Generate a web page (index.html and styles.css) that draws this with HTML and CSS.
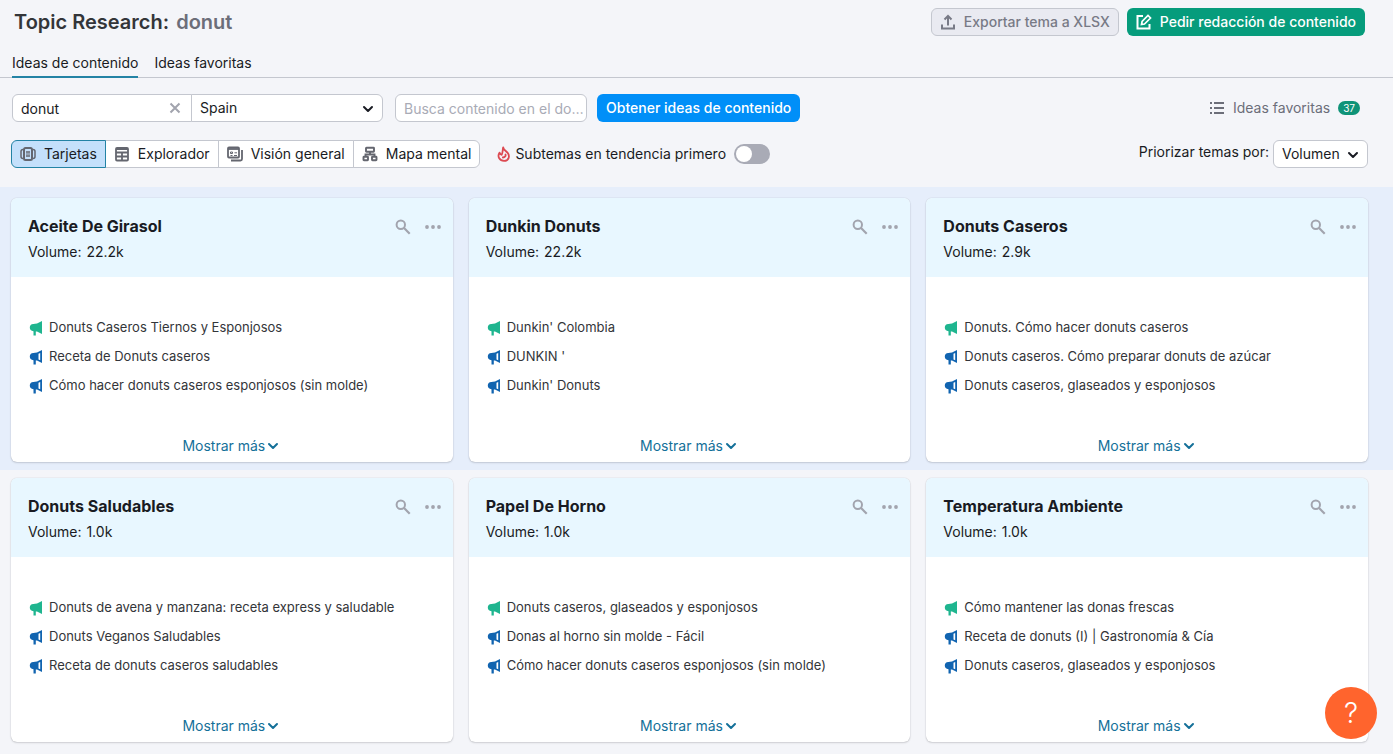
FILE: index.html
```html
<!DOCTYPE html>
<html lang="es">
<head>
  <meta charset="UTF-8">
  <meta name="viewport" content="width=device-width, initial-scale=1">
  <title>Topic Research: donut</title>
  <link rel="stylesheet" href="styles.css">
</head>
<body>

<!-- shared icons -->
<svg class="sprite" aria-hidden="true">
  <symbol id="i-chevron" viewBox="0 0 12 12"><path d="M2 4l4 4 4-4" fill="none" stroke="currentColor" stroke-width="2" stroke-linecap="round" stroke-linejoin="round"/></symbol>
  <symbol id="i-search" viewBox="0 0 16 16"><circle cx="5.800" cy="5.800" r="4.200" fill="none" stroke="currentColor" stroke-width="2"/><path d="M8.800 8.800l5.900 5.900" stroke="currentColor" stroke-width="2.200"/></symbol>
  <symbol id="i-dots" viewBox="0 0 16 16"><g fill="currentColor"><circle cx="2" cy="8" r="1.900"/><circle cx="8" cy="8" r="1.900"/><circle cx="14" cy="8" r="1.900"/></g></symbol>
  <symbol id="i-horn" viewBox="0 0 14 16"><path d="M13 1v13L8 11.600H6.800V15.500H4.500V11.300C2 11 .8 9.600 .8 7.500S2 4 4.300 3.900L8 3.500z" fill="currentColor"/></symbol>
  <symbol id="i-horn-open" viewBox="0 0 14 16"><path d="M13 1v13L8 11.600H6.800V15.500H4.500V11.300C2 11 .8 9.600 .8 7.500S2 4 4.300 3.900L8 3.500z" fill="currentColor"/><path d="M9.500 4.800L11.200 4v7.200L9.500 10.400z" fill="#fff"/></symbol>
</svg>

<header class="header">
  <h1 class="title">Topic Research: <span>donut</span></h1>
  <div class="actions">
    <button class="btn btn-export" disabled>
      <svg class="icon" viewBox="0 0 16 16" fill="none" stroke="currentColor" stroke-width="2"><path d="M2 10.500v4h12v-4M8 11.500V3M4.500 5.500L8 2l3.500 3.500"/></svg>
      Exportar tema a XLSX
    </button>
    <button class="btn btn-order">
      <svg class="icon" viewBox="0 0 16 16" fill="none" stroke="currentColor" stroke-width="2"><path d="M7 2H1.500v12.500H13.500V10"/><path d="M5.500 10.500l.6-3L12 1.500l2.500 2.500-6 6z" stroke-width="1.700"/></svg>
      Pedir redacción de contenido
    </button>
  </div>
</header>

<nav class="tabs">
  <a href="#" class="tab active">Ideas de contenido</a>
  <a href="#" class="tab">Ideas favoritas</a>
</nav>

<form class="search-row">
  <div class="field-group">
    <div class="field field-topic">
      <input type="text" value="donut" aria-label="Tema">
      <button type="button" class="clear" aria-label="Borrar">
        <svg viewBox="0 0 12 12"><path d="M1.500 1.500l9 9M10.500 1.500l-9 9" stroke="currentColor" stroke-width="2"/></svg>
      </button>
    </div>
    <div class="field field-country">
      <select aria-label="País"><option>Spain</option></select>
      <svg class="chevron"><use href="#i-chevron"/></svg>
    </div>
  </div>
  <input type="text" class="domain" placeholder="Busca contenido en el dominio" aria-label="Dominio">
  <button type="button" class="btn btn-primary">Obtener ideas de contenido</button>
  <a href="#" class="favorites">
    <svg class="icon" viewBox="0 0 16 16" fill="currentColor"><path d="M1 2h2v2H1zM5 2h10v2H5zM1 7h2v2H1zM5 7h10v2H5zM1 12h2v2H1zM5 12h10v2H5z"/></svg>
    Ideas favoritas
    <span class="badge">37</span>
  </a>
</form>

<div class="view-row">
  <div class="views">
    <button class="view active">
      <svg class="icon" viewBox="0 0 16 16" fill="none" stroke="currentColor"><rect x="4" y="2" width="8" height="12" rx="1.500" stroke-width="2"/><path d="M6 6h4M6 10h4" stroke-width="1.400"/><path d="M6 8h4" stroke-width="1"/><path d="M3 3.500C1.500 3.500 1 4.500 1 5.500v5c0 1 .5 2 2 2M13 3.500c1.500 0 2 1 2 2v5c0 1-.5 2-2 2" stroke-width="1.500"/></svg>
      Tarjetas
    </button>
    <button class="view">
      <svg class="icon" viewBox="0 0 16 16" fill="none" stroke="currentColor" stroke-width="1.800"><rect x="2" y="2" width="12" height="12.500" rx="1"/><path d="M2 3h12M2 6.500h12M2 10.500h12M8 6.500v8"/></svg>
      Explorador
    </button>
    <button class="view">
      <svg class="icon" viewBox="0 0 16 16" fill="none" stroke="currentColor" stroke-width="1.800"><rect x="1" y="1.500" width="11" height="10" rx="1"/><path d="M1 3h11"/><path d="M3.500 6h2v1.500h-2zM7.500 6.800h2.500M3.500 9.500h2M7 9.500h3" stroke-width="1"/><path d="M15 4v9q0 1.500-1.500 1.500H4"/></svg>
      Visión general
    </button>
    <button class="view">
      <svg class="icon" viewBox="0 0 16 16" fill="none" stroke="currentColor" stroke-width="1.900"><rect x="4" y="1.800" width="8" height="4" rx=".5"/><rect x="1.500" y="10.800" width="4.500" height="3.500" rx=".5"/><rect x="10" y="10.800" width="4.500" height="3.500" rx=".5"/><path d="M8 6v2.500M3.500 11V8.500h9V11"/></svg>
      Mapa mental
    </button>
  </div>
  <label class="trending">
    <svg class="flame" viewBox="0 0 16 16"><path d="M7.200 1.300c.3 2.400 2.600 3.400 4.300 5.400 2.900 3.500 1 8-3.300 8.200-4.600.1-7.200-4.200-4.700-8.300.4 1.300 1.100 2 2.200 2.200C7 6.500 6.500 3.500 7.200 1.300zM9.500 8.500c.5 1.500-.4 2.700-2.700 3" fill="none" stroke="#dc4a52" stroke-width="1.800" stroke-linejoin="round" stroke-linecap="round"/></svg>
    <span>Subtemas en tendencia primero</span>
    <input type="checkbox" class="switch">
  </label>
  <div class="priority">
    <label for="priority">Priorizar temas por:</label>
    <div class="field field-priority">
      <select id="priority"><option>Volumen</option></select>
      <svg class="chevron"><use href="#i-chevron"/></svg>
    </div>
  </div>
</div>

<main>
  <section class="cards selected">
    <article class="card">
      <div class="card-head">
        <div><h2>Aceite De Girasol</h2><p>Volume: <span>22.2k</span></p></div>
        <div class="tools">
          <button aria-label="Buscar"><svg><use href="#i-search"/></svg></button>
          <button aria-label="Más"><svg><use href="#i-dots"/></svg></button>
        </div>
      </div>
      <ul class="ideas">
        <li><svg class="top"><use href="#i-horn"/></svg>Donuts Caseros Tiernos y Esponjosos</li>
        <li><svg><use href="#i-horn-open"/></svg>Receta de Donuts caseros</li>
        <li><svg><use href="#i-horn-open"/></svg>Cómo hacer donuts caseros esponjosos (sin molde)</li>
      </ul>
      <button class="more">Mostrar más<svg><use href="#i-chevron"/></svg></button>
    </article>
    <article class="card">
      <div class="card-head">
        <div><h2>Dunkin Donuts</h2><p>Volume: <span>22.2k</span></p></div>
        <div class="tools">
          <button aria-label="Buscar"><svg><use href="#i-search"/></svg></button>
          <button aria-label="Más"><svg><use href="#i-dots"/></svg></button>
        </div>
      </div>
      <ul class="ideas">
        <li><svg class="top"><use href="#i-horn"/></svg>Dunkin' Colombia</li>
        <li><svg><use href="#i-horn-open"/></svg>DUNKIN '</li>
        <li><svg><use href="#i-horn-open"/></svg>Dunkin' Donuts</li>
      </ul>
      <button class="more">Mostrar más<svg><use href="#i-chevron"/></svg></button>
    </article>
    <article class="card">
      <div class="card-head">
        <div><h2>Donuts Caseros</h2><p>Volume: <span>2.9k</span></p></div>
        <div class="tools">
          <button aria-label="Buscar"><svg><use href="#i-search"/></svg></button>
          <button aria-label="Más"><svg><use href="#i-dots"/></svg></button>
        </div>
      </div>
      <ul class="ideas">
        <li><svg class="top"><use href="#i-horn"/></svg>Donuts. Cómo hacer donuts caseros</li>
        <li><svg><use href="#i-horn-open"/></svg>Donuts caseros. Cómo preparar donuts de azúcar</li>
        <li><svg><use href="#i-horn-open"/></svg>Donuts caseros, glaseados y esponjosos</li>
      </ul>
      <button class="more">Mostrar más<svg><use href="#i-chevron"/></svg></button>
    </article>
  </section>

  <section class="cards">
    <article class="card">
      <div class="card-head">
        <div><h2>Donuts Saludables</h2><p>Volume: <span>1.0k</span></p></div>
        <div class="tools">
          <button aria-label="Buscar"><svg><use href="#i-search"/></svg></button>
          <button aria-label="Más"><svg><use href="#i-dots"/></svg></button>
        </div>
      </div>
      <ul class="ideas">
        <li><svg class="top"><use href="#i-horn"/></svg>Donuts de avena y manzana: receta express y saludable</li>
        <li><svg><use href="#i-horn-open"/></svg>Donuts Veganos Saludables</li>
        <li><svg><use href="#i-horn-open"/></svg>Receta de donuts caseros saludables</li>
      </ul>
      <button class="more">Mostrar más<svg><use href="#i-chevron"/></svg></button>
    </article>
    <article class="card">
      <div class="card-head">
        <div><h2>Papel De Horno</h2><p>Volume: <span>1.0k</span></p></div>
        <div class="tools">
          <button aria-label="Buscar"><svg><use href="#i-search"/></svg></button>
          <button aria-label="Más"><svg><use href="#i-dots"/></svg></button>
        </div>
      </div>
      <ul class="ideas">
        <li><svg class="top"><use href="#i-horn"/></svg>Donuts caseros, glaseados y esponjosos</li>
        <li><svg><use href="#i-horn-open"/></svg>Donas al horno sin molde - Fácil</li>
        <li><svg><use href="#i-horn-open"/></svg>Cómo hacer donuts caseros esponjosos (sin molde)</li>
      </ul>
      <button class="more">Mostrar más<svg><use href="#i-chevron"/></svg></button>
    </article>
    <article class="card">
      <div class="card-head">
        <div><h2>Temperatura Ambiente</h2><p>Volume: <span>1.0k</span></p></div>
        <div class="tools">
          <button aria-label="Buscar"><svg><use href="#i-search"/></svg></button>
          <button aria-label="Más"><svg><use href="#i-dots"/></svg></button>
        </div>
      </div>
      <ul class="ideas">
        <li><svg class="top"><use href="#i-horn"/></svg>Cómo mantener las donas frescas</li>
        <li><svg><use href="#i-horn-open"/></svg>Receta de donuts (I) | Gastronomía &amp; Cía</li>
        <li><svg><use href="#i-horn-open"/></svg>Donuts caseros, glaseados y esponjosos</li>
      </ul>
      <button class="more">Mostrar más<svg><use href="#i-chevron"/></svg></button>
    </article>
  </section>
</main>

<button class="help" aria-label="Ayuda">?</button>

</body>
</html>
```
FILE: styles.css
```css
* { box-sizing: border-box; }
body {
  margin: 0;
  background: #f4f5f9;
  color: #191b23;
  font: 14px/20px Inter, "Liberation Sans", sans-serif;
}
h1, h2, p, ul { margin: 0; padding: 0; }
a { color: inherit; text-decoration: none; }
button, input, select { font: inherit; color: inherit; margin: 0; }
button { cursor: pointer; }
svg { display: block; flex: none; }
.sprite { display: none; }
.icon { width: 16px; height: 16px; }

.header {
  display: flex;
  justify-content: space-between;
  align-items: center;
  padding: 8px 28px 0 14px;
}
.title { font-size: 20px; line-height: 28px; font-weight: 600; color: #333539; }
.title span { color: #6c6e79; margin-left: 2px; }
.actions { display: flex; gap: 8px; }
.btn {
  display: flex;
  align-items: center;
  gap: 8px;
  height: 28px;
  padding: 0 8px;
  border: 1px solid transparent;
  border-radius: 6px;
  font-weight: 500;
}
.btn-export { background: #e9eaf1; border-color: #c4c7cf; color: #787a86; }
.btn-order { background: #069c7c; color: #fff; }
.btn-primary { background: #008ff8; color: #fff; }

.tabs {
  display: flex;
  gap: 16px;
  height: 26px;
  margin-top: 16px;
  padding: 0 12px;
  border-bottom: 1px solid #c4c7cf;
}
.tab { height: 26px; line-height: 22px; border-bottom: 2px solid transparent; }
.tab.active { border-color: #2383a5; }

.search-row {
  display: flex;
  align-items: center;
  padding: 16px 33px 0 12px;
}
.field-group { display: flex; margin-right: 12px; }
.field {
  position: relative;
  height: 28px;
  background: #fff;
  border: 1px solid #c4c7cf;
  border-radius: 6px;
}
.field input, .field select {
  width: 100%;
  height: 26px;
  padding: 0 8px;
  border: 0;
  background: none;
  outline: none;
  appearance: none;
}
.field-topic { width: 180px; border-radius: 6px 0 0 6px; }
.field-country { width: 192px; margin-left: -1px; border-radius: 0 6px 6px 0; }
.field-priority { width: 95px; }
.clear {
  position: absolute;
  top: 7px;
  right: 10px;
  padding: 0;
  border: 0;
  background: none;
  color: #a2a4ae;
}
.clear svg { width: 12px; height: 12px; }
.chevron {
  position: absolute;
  top: 8px;
  right: 8px;
  width: 12px;
  height: 12px;
  pointer-events: none;
}
.domain {
  width: 192px;
  height: 28px;
  margin-right: 10px;
  padding: 0 2px 0 8px;
  background: #fff;
  border: 1px solid #c4c7cf;
  border-radius: 6px;
  text-overflow: ellipsis;
}
.domain::placeholder { color: #a9abb6; }
.favorites {
  display: flex;
  align-items: center;
  gap: 8px;
  margin-left: auto;
  color: #6c6e79;
}
.badge {
  padding: 0 5px;
  border-radius: 7px;
  background: #0f9378;
  color: #fff;
  font-size: 10px;
  line-height: 14px;
}

.view-row {
  display: flex;
  align-items: center;
  padding: 18px 25px 19px 11px;
}
.views { display: flex; }
.view {
  display: flex;
  align-items: center;
  gap: 8px;
  height: 28px;
  padding: 0 8px;
  background: #fff;
  border: 1px solid #c4c7cf;
  margin-right: -1px;
}
.view:first-child { border-radius: 6px 0 0 6px; }
.view:last-child { border-radius: 0 6px 6px 0; }
.view.active { position: relative; background: #c4e0fb; border-color: #2383a5; }
.view .icon { color: #64666f; }
.trending { display: flex; align-items: center; margin-left: 17px; line-height: 22px; }
.flame { width: 16px; height: 16px; margin-right: 3px; }
.switch {
  appearance: none;
  width: 36px;
  height: 20px;
  margin-left: 8px;
  padding: 2px;
  border-radius: 10px;
  background: #a9abb6;
}
.switch::before {
  content: "";
  display: block;
  width: 16px;
  height: 16px;
  border-radius: 50%;
  background: #fff;
}
.switch:checked::before { margin-left: auto; }
.priority { display: flex; gap: 4px; margin-left: auto; line-height: 24px; }

.cards {
  display: grid;
  grid-template-columns: repeat(3, 1fr);
  gap: 16px;
  padding: 8px 25px 8px 11px;
}
.cards.selected { background: #e6eefb; padding-top: 11px; }
.card {
  display: flex;
  flex-direction: column;
  background: #fff;
  border-radius: 6px;
  box-shadow: 0 0 1px rgba(25, 27, 35, 0.3), 0 1px 2px rgba(25, 27, 35, 0.15);
  overflow: hidden;
}
.card-head {
  display: flex;
  justify-content: space-between;
  padding: 15px 12px 12px 17px;
  background: #e8f7ff;
}
.card-head h2 { font-size: 16px; line-height: 26px; font-weight: 700; }
.card-head p { line-height: 26px; }
.card-head p span { margin-left: 1px; }
.tools { display: flex; align-items: flex-start; gap: 14px; padding-top: 6px; }
.tools button { padding: 0; border: 0; background: none; color: #a2a4ae; }
.tools svg { width: 16px; height: 16px; }
.ideas { list-style: none; padding: 36px 18px 32px; }
.ideas li {
  display: flex;
  align-items: center;
  gap: 6px;
  font-size: 13px;
  line-height: 29px;
  color: #333539;
}
.ideas svg { width: 14px; height: 16px; color: #1164b0; }
.ideas svg.top { color: #1fb58f; }
.more {
  display: flex;
  align-items: center;
  align-self: center;
  gap: 2px;
  padding: 0 2px 0 0;
  margin: 4px 0 6px;
  border: 0;
  background: none;
  color: #147099;
}
.more svg { width: 12px; height: 12px; }

.help {
  position: fixed;
  right: 16px;
  bottom: 15px;
  width: 52px;
  height: 52px;
  padding: 0;
  border: 0;
  border-radius: 50%;
  background: #ff642d;
  color: #fff;
  font-size: 28px;
  font-weight: 300;
  line-height: 52px;
}
```
